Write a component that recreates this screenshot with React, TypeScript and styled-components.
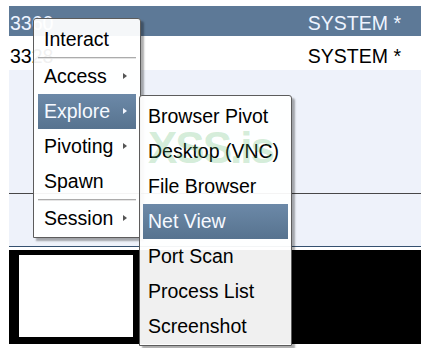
import styled, { createGlobalStyle } from 'styled-components';

const GlobalStyle = createGlobalStyle`
  html, body {
    margin: 0;
    padding: 0;
    background: #fff;
  }
  * {
    box-sizing: border-box;
  }
`

type Session = {
  id: string,
  user: string,
  selected?: boolean,
}

type MenuEntry = {
  label: string,
  submenu?: boolean,
  active?: boolean,
  separatorAfter?: boolean,
}

const sessions: Session[] = [
  { id: "3360", user: "SYSTEM *", selected: true },
  { id: "3328", user: "SYSTEM *" },
]

const mainMenu: MenuEntry[] = [
  { label: "Interact", separatorAfter: true },
  { label: "Access", submenu: true },
  { label: "Explore", submenu: true, active: true },
  { label: "Pivoting", submenu: true },
  { label: "Spawn", separatorAfter: true },
  { label: "Session", submenu: true },
]

const exploreMenu: MenuEntry[] = [
  { label: "Browser Pivot" },
  { label: "Desktop (VNC)" },
  { label: "File Browser" },
  { label: "Net View", active: true },
  { label: "Port Scan" },
  { label: "Process List" },
  { label: "Screenshot" },
]

const Page = styled.div`
  position: relative;
  width: 424px;
  height: 348px;
  overflow: hidden;
  padding: 6px 3px 0 9px;
  display: flex;
  flex-direction: column;
  background: #fff;
  font-family: "Liberation Sans", Arial, sans-serif;
`

interface RowProps {
  $selected?: boolean;
}
const Row = styled.div<RowProps>`
  display: flex;
  flex-direction: row;
  justify-content: space-between;
  align-items: flex-end;
  height: ${props => props.$selected ? "30px" : "34px"};
  padding: 0 20px ${props => props.$selected ? "2px" : "3px"} 1px;
  background: ${props => props.$selected ? "#5d7997" : "#fff"};
  color: ${props => props.$selected ? "#eef4ff" : "#000"};
  font-size: 19.5px;
  line-height: 22px;
`

const TableFill = styled.div`
  height: 124px;
  background: #eef2fa;
  border-bottom: 1px solid #474747;
`

const TableFoot = styled.div`
  height: 53px;
  background: #eef2fa;
  border-bottom: 1px solid #34506f;
  margin-bottom: 3px;
`

const Console = styled.div`
  height: 94px;
  padding: 5px 0 0 10px;
  background: #000;
`

const Thumb = styled.div`
  width: 114px;
  height: 82px;
  background: #fff;
`

interface MenuProps {
  $left: number;
  $top: number;
  $width: number;
}
const Menu = styled.div<MenuProps>`
  position: absolute;
  left: ${props => props.$left}px;
  top: ${props => props.$top}px;
  width: ${props => props.$width}px;
  display: flex;
  flex-direction: column;
  padding: 3px 0 1px;
  background: rgba(255, 255, 255, 0.94);
  border: 1px solid #5c5c5c;
  border-radius: 3px 3px 0 0;
  box-shadow: 3px 3px 2px rgba(0, 0, 0, 0.32);
  font-size: 19.5px;
`

interface ItemProps {
  $active?: boolean;
  $inset: number;
}
const Item = styled.div<ItemProps>`
  position: relative;
  height: 35px;
  line-height: 35px;
  margin: 0 ${props => props.$inset}px;
  padding-left: ${props => props.$inset === 4 ? "6px" : "5px"};
  white-space: nowrap;
  color: ${props => props.$active ? "#f6f9ff" : "#000"};
  background: ${props => props.$active ? "linear-gradient(#6c89a8, #57738f)" : "transparent"};
`

interface ArrowProps {
  $light?: boolean;
}
const Arrow = styled.span<ArrowProps>`
  position: absolute;
  right: 9px;
  top: 50%;
  margin-top: -4px;
  width: 0;
  height: 0;
  border-top: 3.5px solid transparent;
  border-bottom: 3.5px solid transparent;
  border-left: 4px solid ${props => props.$light ? "#f2f6ff" : "#555"};
`

const Separator = styled.div`
  height: 2px;
  margin: 0 4px;
  border-top: 1px solid #acacac;
  border-bottom: 1px solid #e4e4e4;
`

// watermark stamped over the screenshot
const Watermark = styled.div`
  position: absolute;
  left: 148px;
  top: 126px;
  font-size: 44px;
  font-weight: bold;
  line-height: 1;
  letter-spacing: -2px;
  color: rgba(90, 185, 110, 0.27);
  pointer-events: none;
`

function MenuList({ items, inset }: { items: MenuEntry[], inset: number }) {
  return (
    <>
      {items.map((item, index) => (
        <div key={index}>
          <Item $active={item.active} $inset={inset}>
            {item.label}
            {item.submenu && <Arrow $light={item.active} />}
          </Item>
          {item.separatorAfter && <Separator />}
        </div>
      ))}
    </>
  )
}

function App() {
  return (
    <Page>
      <GlobalStyle />
      {sessions.map((s) => (
        <Row key={s.id} $selected={s.selected}>
          <span>{s.id}</span>
          <span>{s.user}</span>
        </Row>
      ))}
      <TableFill />
      <TableFoot />
      <Console>
        <Thumb />
      </Console>
      <Menu $left={33} $top={18} $width={108}>
        <MenuList items={mainMenu} inset={4} />
      </Menu>
      <Menu $left={139} $top={95} $width={153}>
        <MenuList items={exploreMenu} inset={3} />
      </Menu>
      <Watermark>XSS.is</Watermark>
    </Page>
  )
}

export default App
